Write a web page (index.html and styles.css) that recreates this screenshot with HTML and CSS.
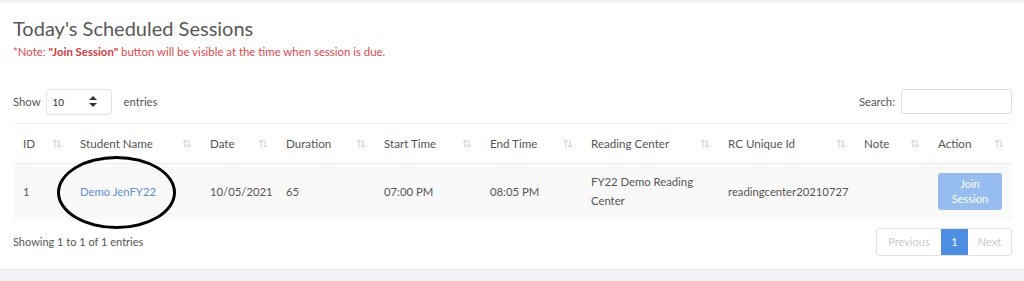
FILE: index.html
```html
<!DOCTYPE html>
<html>
<head>
<meta charset="utf-8">
<link rel="stylesheet" href="styles.css">
</head>
<body>
<div class="card">
  <h1 class="title">Today's Scheduled Sessions</h1>
  <p class="note">*Note: <b>"Join Session"</b> button will be visible at the time when session is due.</p>
  <div class="controls">
    <div class="length">
      <span>Show</span>
      <div class="select"><span>10</span>
        <svg width="8" height="11" viewBox="0 0 8 11"><path d="M4 0 L8 4 H0 Z M4 11 L0 7 H8 Z" fill="#333"/></svg>
      </div>
      <span>entries</span>
    </div>
    <div class="search">
      <span>Search:</span>
      <div class="input"></div>
    </div>
  </div>
  <table class="grid">
    <colgroup>
      <col class="c-id"><col class="c-name"><col class="c-date"><col class="c-dur"><col class="c-start"><col class="c-end"><col class="c-rc"><col class="c-rcid"><col class="c-note"><col class="c-act">
    </colgroup>
    <thead>
      <tr>
        <th><div class="th">ID<svg class="sort" viewBox="0 0 10 9"><path d="M3 8.5V1M0.8 3.2L3 1L5.2 3.2M7 0.5V8M4.8 5.8L7 8L9.2 5.8" /></svg></div></th>
        <th><div class="th">Student Name<svg class="sort" viewBox="0 0 10 9"><path d="M3 8.5V1M0.8 3.2L3 1L5.2 3.2M7 0.5V8M4.8 5.8L7 8L9.2 5.8" /></svg></div></th>
        <th><div class="th">Date<svg class="sort" viewBox="0 0 10 9"><path d="M3 8.5V1M0.8 3.2L3 1L5.2 3.2M7 0.5V8M4.8 5.8L7 8L9.2 5.8" /></svg></div></th>
        <th><div class="th">Duration<svg class="sort" viewBox="0 0 10 9"><path d="M3 8.5V1M0.8 3.2L3 1L5.2 3.2M7 0.5V8M4.8 5.8L7 8L9.2 5.8" /></svg></div></th>
        <th><div class="th">Start Time<svg class="sort" viewBox="0 0 10 9"><path d="M3 8.5V1M0.8 3.2L3 1L5.2 3.2M7 0.5V8M4.8 5.8L7 8L9.2 5.8" /></svg></div></th>
        <th><div class="th">End Time<svg class="sort" viewBox="0 0 10 9"><path d="M3 8.5V1M0.8 3.2L3 1L5.2 3.2M7 0.5V8M4.8 5.8L7 8L9.2 5.8" /></svg></div></th>
        <th><div class="th">Reading Center<svg class="sort" viewBox="0 0 10 9"><path d="M3 8.5V1M0.8 3.2L3 1L5.2 3.2M7 0.5V8M4.8 5.8L7 8L9.2 5.8" /></svg></div></th>
        <th><div class="th">RC Unique Id<svg class="sort" viewBox="0 0 10 9"><path d="M3 8.5V1M0.8 3.2L3 1L5.2 3.2M7 0.5V8M4.8 5.8L7 8L9.2 5.8" /></svg></div></th>
        <th><div class="th">Note<svg class="sort" viewBox="0 0 10 9"><path d="M3 8.5V1M0.8 3.2L3 1L5.2 3.2M7 0.5V8M4.8 5.8L7 8L9.2 5.8" /></svg></div></th>
        <th><div class="th">Action<svg class="sort" viewBox="0 0 10 9"><path d="M3 8.5V1M0.8 3.2L3 1L5.2 3.2M7 0.5V8M4.8 5.8L7 8L9.2 5.8" /></svg></div></th>
      </tr>
    </thead>
    <tbody>
      <tr>
        <td>1</td>
        <td class="namecell"><a class="name" href="#">Demo JenFY22</a><span class="circle"></span></td>
        <td>10/05/2021</td>
        <td>65</td>
        <td>07:00 PM</td>
        <td>08:05 PM</td>
        <td>FY22 Demo Reading Center</td>
        <td>readingcenter20210727</td>
        <td></td>
        <td><button class="join">Join Session</button></td>
      </tr>
    </tbody>
  </table>
  <div class="footer">
    <div class="info">Showing 1 to 1 of 1 entries</div>
    <div class="pager">
      <span class="pg prev">Previous</span><span class="pg cur">1</span><span class="pg next">Next</span>
    </div>
  </div>
</div>
</body>
</html>
```
FILE: styles.css
```css
* { box-sizing: border-box; }
html, body { margin: 0; padding: 0; }
body {
  background: #f1f3f8;
  font-family: "Lato", "Noto Sans", sans-serif;
  color: #555;
  font-size: 11.3px;
  width: 1024px;
  height: 281px;
  overflow: hidden;
}
.card {
  margin-top: 3px;
  background: #fff;
  height: 267px;
  padding: 11px 12px 0 13px;
  border-bottom: 1px solid #e9ebf0;
}
.title {
  margin: 0;
  font-weight: 400;
  font-size: 20px;
  line-height: 28px;
  color: #585858;
}
.note {
  margin: 2px 0 0;
  font-size: 11.4px;
  line-height: 16px;
  color: #e0484c;
}
.note b { font-weight: 700; color: #d83a3e; }
.controls {
  margin-top: 28px;
  display: flex;
  justify-content: space-between;
  align-items: center;
  height: 27px;
}
.length, .search {
  display: flex;
  align-items: center;
  color: #555;
}
.select {
  margin-left: 5px;
  margin-right: 12px;
  width: 66px;
  height: 26px;
  border: 1px solid #e3e3e3;
  border-radius: 3px;
  display: flex;
  align-items: center;
  justify-content: space-between;
  padding: 0 14px 0 6px;
  font-size: 10px;
  color: #333;
}
.input {
  margin-left: 6px;
  width: 111px;
  height: 25px;
  border: 1px solid #dedede;
  border-radius: 3px;
}
.grid {
  margin-top: 8px;
  width: 999px;
  border-collapse: collapse;
  table-layout: fixed;
}
.c-id { width: 57px; }
.c-name { width: 130px; }
.c-date { width: 76px; }
.c-dur { width: 98px; }
.c-start { width: 106px; }
.c-end { width: 101px; }
.c-rc { width: 137px; }
.c-rcid { width: 136px; }
.c-note { width: 74px; }
.c-act { width: 84px; }
th {
  height: 40px;
  border-top: 1px solid #f0f0f0;
  border-bottom: 1px solid #eeeeee;
  font-weight: 400;
  font-size: 11.6px;
  text-align: left;
  padding: 0 8px 0 10px;
  color: #555;
}
.th {
  display: flex;
  justify-content: space-between;
  align-items: center;
}
.sort {
  width: 10px;
  height: 9px;
  fill: none;
  stroke: #c9c9c9;
  stroke-width: 0.9;
}
td {
  height: 55px;
  background: #f9f9f9;
  padding: 0 10px;
  line-height: 19px;
  color: #555;
}
.namecell { position: relative; }
.name {
  color: #5b8fd8;
  text-decoration: none;
}
.circle {
  position: absolute;
  left: -13px;
  top: -8px;
  width: 119px;
  height: 73px;
  border: 3px solid #000;
  border-radius: 50%;
}
.join {
  width: 64px;
  height: 37px;
  border: none;
  border-radius: 3px;
  background: #97bdf0;
  color: #fff;
  font-family: inherit;
  font-size: 11px;
  line-height: 15px;
  padding: 0 8px;
}
.footer {
  display: flex;
  justify-content: space-between;
  align-items: center;
  margin-top: 9px;
  width: 999px;
}
.info { font-size: 11px; }
.pager {
  display: flex;
  border: 1px solid #e3e3e3;
  border-radius: 3px;
  height: 28px;
  overflow: hidden;
}
.pg {
  display: flex;
  align-items: center;
  justify-content: center;
  font-size: 11px;
  color: #ccc;
}
.prev { width: 64px; }
.cur { width: 27px; background: #4d8ee3; color: #fff; }
.next { width: 43px; }
```
